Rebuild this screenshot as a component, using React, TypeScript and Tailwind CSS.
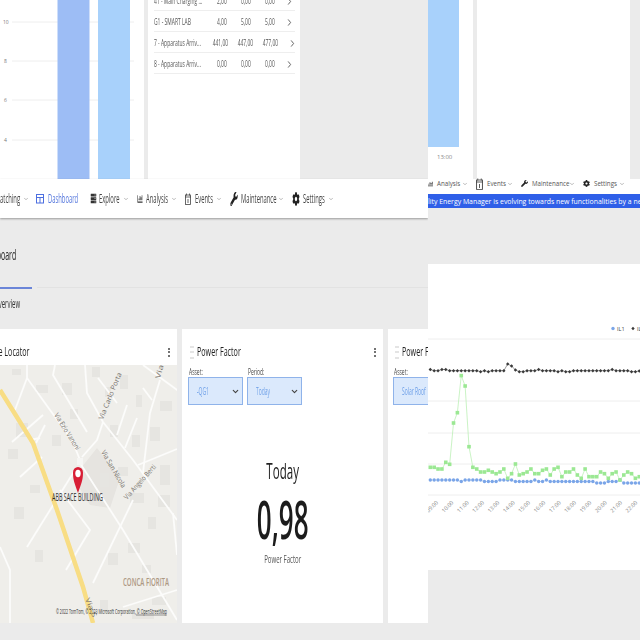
import type { ReactNode } from "react";
import { ChevronDown, ChevronRight } from "lucide-react";
import { FaChartBar, FaCog, FaServer, FaWrench } from "react-icons/fa";

// the left half of the capture is squashed horizontally, so its text is too
const Sq = ({
  children,
  className = "",
  squash = "scale-x-[.55]",
}: {
  children: ReactNode;
  className?: string;
  squash?: string;
}) => <span className={`inline-block whitespace-nowrap ${squash} ${className}`}>{children}</span>;

const rows = [
  { name: "41 - Main Charging ...", a: "2,00", b: "0,00", c: "0,00" },
  { name: "G1 - SMART LAB", a: "4,00", b: "5,00", c: "5,00" },
  { name: "7 - Apparatus Arriv...", a: "441,00", b: "447,00", c: "477,00" },
  { name: "8 - Apparatus Arriv...", a: "0,00", b: "0,00", c: "0,00" },
];

const green = [
  467.3, 467.3, 469, 469, 462.3, 464.3, 423, 412.7, 375.6, 386, 446.7, 467.3, 469, 472, 472, 470.3, 472, 473.7, 472, 469,
  478.3, 473.7, 464, 475, 473.7, 472, 469, 473.7, 473.7, 470.3, 469, 475, 469, 467.3, 476.7, 472, 472, 469, 475, 478.3,
  469, 476.7, 476.7, 476.7, 472, 473.7, 478.3, 473.7, 472, 480, 475, 472, 473.7, 478.3, 476.7,
];
const blue = [
  480, 480, 480, 480, 480, 480, 480, 480, 481.5, 480, 480, 480, 480, 480, 481.5, 481.5, 481.5, 481.5, 480, 480, 480, 480,
  481.5, 481.5, 481.5, 481.5, 481.5, 480, 481.5, 481.5, 480, 481.5, 481.5, 481.5, 481.5, 481.5, 481.5, 481.5, 481.5, 481.5,
  481.5, 481.5, 481.5, 483, 483, 483, 481.5, 481.5, 481.5, 480, 483, 483, 483, 483, 483,
];
const black = [
  369.5, 370.7, 370.7, 369.5, 369.5, 370.7, 370.7, 370.7, 370.7, 370.7, 370.7, 370.7, 370.7, 371.7, 370.7, 371.7, 370.7,
  370.7, 370.7, 370.7, 364, 366, 370, 371.7, 371.7, 370.7, 370.7, 370.7, 369.5, 370.7, 370.7, 370.7, 370.7, 371.7, 370.7,
  371.7, 371.7, 370.7, 370.7, 370.7, 370.7, 370.7, 370.7, 370.7, 370.7, 370.7, 370.7, 369.5, 370.7, 370.7, 370.7, 370.7,
  371.7, 371.7, 371,
];
const hours = ["09:00", "10:00", "11:00", "12:00", "13:00", "14:00", "15:00", "16:00", "17:00", "18:00", "19:00", "20:00", "21:00", "22:00"];
const px = (i: number) => 430.3 + i * 3.87;
const line = (ys: number[]) => ys.map((y, i) => `${px(i)},${y}`).join(" ");

const roads = [
  "27,0 27,13 50,45 72,75 80,95",
  "55,0 53,10 87,67",
  "85,0 87,28 103,57 133,95 177,155",
  "103,57 97,75 82,92",
  "98,13 117,38",
  "127,40 117,70",
  "137,53 125,83",
  "143,0 180,27",
  "160,15 150,48 143,108",
  "143,23 152,35",
  "138,100 177,84",
  "80,98 123,165 177,255",
  "133,135 93,218",
  "75,105 27,182",
  "12,77 43,50",
  "30,75 40,73",
  "20,112 42,92",
  "0,182 10,205 10,258",
  "123,242 177,225",
  "173,148 177,190",
  "45,60 36,78",
  "27,13 15,45",
  "60,125 90,165 66,205",
];
const blocks = [
  [12, 4, 9, 6], [36, 20, 12, 8], [62, 18, 10, 12], [70, 44, 8, 10], [105, 22, 6, 10], [120, 10, 8, 14], [136, 30, 6, 12],
  [16, 58, 12, 14], [8, 84, 10, 10], [30, 120, 10, 8], [14, 142, 10, 12], [52, 70, 9, 11], [118, 102, 10, 9], [150, 62, 10, 14],
  [160, 100, 10, 20], [100, 108, 9, 14], [130, 128, 14, 10], [148, 152, 8, 12], [108, 188, 10, 12], [35, 185, 8, 12],
  [142, 200, 9, 8], [100, 235, 8, 12], [132, 248, 22, 6], [92, 2, 8, 10], [160, 36, 12, 10], [110, 60, 8, 12], [132, 70, 8, 12],
  [158, 130, 12, 12], [128, 178, 12, 10], [152, 232, 14, 8],
];

const MapView = () => (
  <svg viewBox="0 0 177 258" className="block w-full h-full">
    <defs>
      <filter id="soft" x="-5%" y="-5%" width="110%" height="110%">
        <feGaussianBlur stdDeviation=".6" />
      </filter>
    </defs>
    <rect width="177" height="258" fill="#efeeea" />
    <g filter="url(#soft)">
      <polygon points="73,113 97,83 120,113 110,143 90,140" fill="#e6e4e0" />
      {blocks.map(([x, y, w, h], i) => (
        <rect key={i} x={x} y={y} width={w} height={h} fill="#e6e5e1" />
      ))}
      {roads.map((d, i) => (
        <polyline key={i} points={d} fill="none" stroke="#fcfcfb" strokeWidth="1.8" />
      ))}
      <polyline points="0,25 20,57 33,78 57,145 83,222 93,258" fill="none" stroke="#f8dd84" strokeWidth="4.5" />
      <rect x="77" y="93" width="6" height="7" fill="#f6f6f4" />
    </g>
    <g fill="#77736c" fontFamily="Open Sans" fontSize="7">
      <text x="54" y="50" transform="rotate(58 54 50)" textLength="42" lengthAdjust="spacingAndGlyphs">Via Ezio Vanoni</text>
      <text x="103" y="55" transform="rotate(-68 103 55)" textLength="50" lengthAdjust="spacingAndGlyphs">Via Carlo Porta</text>
      <text x="101" y="87" transform="rotate(60 101 87)" textLength="42" lengthAdjust="spacingAndGlyphs">Via San Nicola</text>
      <text x="127" y="135" transform="rotate(-48 127 135)" textLength="44" lengthAdjust="spacingAndGlyphs">Via Angelo Berti</text>
      <text x="160" y="14" transform="rotate(-75 160 14)" textLength="14" lengthAdjust="spacingAndGlyphs">Via</text>
      <text x="85" y="234" transform="rotate(68 85 234)" textLength="20" lengthAdjust="spacingAndGlyphs">Via S</text>
    </g>
    <path d="M78 128 C75 119 73 116 73 107.500 A5 5.500 0 0 1 83 107.500 C83 116 81 119 78 128 Z" fill="#d81e35" />
    <ellipse cx="78" cy="108.500" rx="2.700" ry="3.700" fill="#ffffff" />
    <text x="52" y="136" fontFamily="Open Sans" fontSize="10" fontWeight="500" fill="#2b2b2b" textLength="51" lengthAdjust="spacingAndGlyphs">
      ABB SACE BUILDING
    </text>
    <text x="123" y="221" fontFamily="Open Sans" fontSize="10" fontWeight="600" fill="#ad9883" textLength="46" lengthAdjust="spacingAndGlyphs">
      CONCA FIORITA
    </text>
    <text x="56" y="249" fontFamily="Open Sans" fontSize="6.500" fill="#333333" textLength="111" lengthAdjust="spacingAndGlyphs">
      © 2022 TomTom, © 2023 Microsoft Corporation, © OpenStreetMap
    </text>
    <line x1="136" y1="250" x2="167" y2="250" stroke="#333333" strokeWidth=".5" />
  </svg>
);

const BarChart = () => (
  <svg viewBox="0 0 144 179" className="block w-full h-full">
    {[22, 61, 100, 140].map((y) => (
      <line key={y} x1="12" y1={y} x2="134" y2={y} stroke="#eeeeee" />
    ))}
    <g fontFamily="Open Sans" fontSize="5" fill="#777777">
      <text x="3" y="24">10</text>
      <text x="4" y="63">8</text>
      <text x="4" y="102">6</text>
      <text x="4" y="142">4</text>
    </g>
    <rect x="57.500" y="0" width="32" height="179" fill="#9dbdf5" />
    <rect x="98" y="0" width="32" height="179" fill="#a8d1fb" />
  </svg>
);

const LineChart = () => (
  <svg viewBox="428 264 212 306" className="block w-full h-full">
    {[339, 401, 433, 464, 495].map((y) => (
      <line key={y} x1="428" y1={y} x2="640" y2={y} stroke="#eeeeee" />
    ))}
    <polyline points={line(blue)} fill="none" stroke="#b8cff2" strokeWidth=".7" />
    <polyline points={line(green)} fill="none" stroke="#bdf0b6" strokeWidth=".8" />
    <polyline points={line(black)} fill="none" stroke="#555555" strokeWidth=".6" />
    {blue.map((y, i) => (
      <circle key={i} cx={px(i)} cy={y} r="1.700" fill="#7aa5e8" />
    ))}
    {green.map((y, i) => (
      <rect key={i} x={px(i) - 1.800} y={y - 1.800} width="3.600" height="3.600" fill="#9be893" />
    ))}
    {black.map((y, i) => (
      <path key={i} d={`M${px(i)} ${y - 1.700}l1.700 1.700l-1.700 1.700l-1.700 -1.700z`} fill="#3a3a3a" />
    ))}
    <circle cx="613" cy="328.500" r="1.700" fill="#7aa5e8" />
    <text x="617" y="331" fontFamily="Open Sans" fontSize="5.500" fill="#444444">IL1</text>
    <path d="M633 326.800l1.700 1.700l-1.700 1.700l-1.700 -1.700z" fill="#3a3a3a" />
    <text x="637" y="331" fontFamily="Open Sans" fontSize="5.500" fill="#444444">IL2</text>
    {hours.map((h, i) => (
      <g key={h} transform={`translate(${438.5 + i * 15.33} 503) rotate(-45)`}>
        <text textAnchor="end" fontFamily="Open Sans" fontSize="5.500" fill="#888888">
          {h}
        </text>
      </g>
    ))}
  </svg>
);

const DragDots = () => (
  <div className="grid grid-cols-2 gap-y-[3.500px] w-[4px] shrink-0">
    {[0, 1, 2, 3, 4, 5].map((i) => (
      <span key={i} className="h-[2px] w-[2px] bg-[#e4e4e4]" />
    ))}
  </div>
);

const Kebab = () => (
  <div className="flex flex-col gap-[1.500px]">
    <span className="h-[2px] w-[2px] rounded-full bg-[#444]" />
    <span className="h-[2px] w-[2px] rounded-full bg-[#444]" />
    <span className="h-[2px] w-[2px] rounded-full bg-[#444]" />
  </div>
);

const Select = ({ label, value, className = "" }: { label: string; value: string; className?: string }) => (
  <div className={`flex flex-col shrink-0 ${className}`}>
    <div className="h-[11px] flex items-center pl-[1px] text-[9px] text-[#444]">
      <Sq className="origin-left">{label}</Sq>
    </div>
    <div className="h-[28px] flex items-center justify-between pl-[8px] pr-[2px] bg-[#dbe9fc] border border-[#8fb3ea] text-[11px] text-[#6d9fe8] overflow-hidden">
      <Sq className="origin-left w-[20px]" squash="scale-x-[.45]">
        {value}
      </Sq>
      <ChevronDown size={9} strokeWidth={3} className="text-[#444] shrink-0" />
    </div>
  </div>
);

const TopRow = ({ name, a, b, c }: { name: string; a: string; b: string; c: string }) => (
  <div className="h-[21px] flex items-center pt-[2px] border-b border-[#eeeeee] text-[9px] text-[#555]">
    <div className="w-[49px] flex">
      <Sq className="origin-left">{name}</Sq>
    </div>
    <div className="w-[25px] flex justify-end">
      <Sq className="origin-right">{a}</Sq>
    </div>
    <div className="w-[25px] flex justify-end">
      <Sq className="origin-right">{b}</Sq>
    </div>
    <div className="w-[25px] flex justify-end">
      <Sq className="origin-right">{c}</Sq>
    </div>
    <ChevronRight size={11} strokeWidth={1.800} className="ml-[9px] shrink-0 text-[#333] scale-x-[.8]" />
  </div>
);

const DashIcon = () => (
  <svg width="8" height="11" viewBox="0 0 8 11" fill="none" stroke="#4d6fe0" strokeWidth="1">
    <rect x=".5" y="1.500" width="7" height="8.500" />
    <line x1=".5" y1="4.500" x2="7.500" y2="4.500" />
    <line x1="4" y1="4.500" x2="4" y2="10" />
  </svg>
);

const CalIcon = ({ w = 6 }: { w?: number }) => (
  <svg width={w} height="12" viewBox="0 0 6 12" fill="none" stroke="#444444" strokeWidth=".8" preserveAspectRatio="none">
    <rect x=".5" y="2" width="5" height="9.500" />
    <line x1="0" y1="4" x2="6" y2="4" />
    <line x1="1.500" y1=".5" x2="1.500" y2="2.500" />
    <line x1="4.500" y1=".5" x2="4.500" y2="2.500" />
    <line x1="3" y1="6" x2="3" y2="10" />
  </svg>
);

const Caret = ({ className = "" }: { className?: string }) => (
  <ChevronDown size={6} strokeWidth={2} className={`text-[#777] shrink-0 ${className}`} />
);

// keeps the squashed icon inside the width it takes in the capture
const NarrowIcon = ({ children, width }: { children: ReactNode; width: string }) => (
  <span className={`flex justify-center ${width}`}>
    <span className="inline-flex shrink-0 scale-x-[.55]">{children}</span>
  </span>
);

const LeftNavItem = ({ icon, label, width }: { icon: ReactNode; label: string; width: string }) => (
  <div className="flex items-center ml-[8px]">
    {icon}
    <div className={`ml-[4px] flex ${width}`}>
      <Sq className="origin-left" squash="scale-x-[.45]">
        {label}
      </Sq>
    </div>
    <Caret className="ml-[2px]" />
  </div>
);

const RightNavItem = ({ icon, label, width }: { icon: ReactNode; label: string; width: string }) => (
  <div className="flex items-center ml-[8px]">
    {icon}
    <span className={`ml-[4px] ${width}`}>{label}</span>
    <Caret className="ml-[2px]" />
  </div>
);

export default function App() {
  return (
    <div className="flex w-[640px] h-[640px] overflow-hidden bg-[#ebebeb] font-['Open_Sans',sans-serif]">
      {/* left capture */}
      <div className="w-[428px] shrink-0 overflow-hidden flex flex-col">
        <div className="h-[179px] flex shrink-0">
          <div className="w-[144px] bg-white">
            <BarChart />
          </div>
          <div className="w-[152px] ml-[4px] bg-white pl-[6px] pr-[5px] overflow-hidden">
            <div className="-mt-[10px]">
              {rows.map((r) => (
                <TopRow key={r.name} {...r} />
              ))}
            </div>
          </div>
        </div>

        <div className="h-[39px] shrink-0 flex items-center bg-white shadow-[0_1px_2px_rgba(0,0,0,.35)] relative text-[13px] text-[#444]">
          <div className="w-[20px] flex justify-end">
            <Sq className="origin-right" squash="scale-x-[.45]">
              Matching
            </Sq>
          </div>
          <Caret className="ml-[3px]" />
          <div className="flex items-center ml-[7px] text-[#5577dd]">
            <DashIcon />
            <div className="ml-[4px] w-[30px] flex">
              <Sq className="origin-left" squash="scale-x-[.45]">
                Dashboard
              </Sq>
            </div>
          </div>
          <div className="ml-[5px]" />
          <LeftNavItem icon={<NarrowIcon width="w-[4px]"><FaServer size={11} className="text-[#333]" /></NarrowIcon>} label="Explore" width="w-[22px]" />
          <LeftNavItem icon={<NarrowIcon width="w-[5px]"><FaChartBar size={10} className="text-[#333]" /></NarrowIcon>} label="Analysis" width="w-[23px]" />
          <LeftNavItem icon={<CalIcon />} label="Events" width="w-[19px]" />
          <LeftNavItem icon={<NarrowIcon width="w-[7px]"><FaWrench size={14} className="text-[#222]" /></NarrowIcon>} label="Maintenance" width="w-[35px]" />
          <LeftNavItem icon={<NarrowIcon width="w-[7px]"><FaCog size={14} className="text-[#222]" /></NarrowIcon>} label="Settings" width="w-[23px]" />
        </div>

        <div className="h-[111px] shrink-0 pt-[26px]">
          <div className="h-[20px] w-[16px] flex justify-end items-center text-[14px] font-medium text-[#222]">
            <Sq className="origin-right" squash="scale-x-[.5]">
              Dashboard
            </Sq>
          </div>
          <div className="mt-[23px] h-[2px] flex">
            <div className="w-[32px] bg-[#6b85d8]" />
            <div className="flex-1 ml-[5px] border-t border-[#e2e2e2]" />
          </div>
          <div className="mt-[7px] h-[16px] w-[20px] flex justify-end items-center text-[12px] text-[#333]">
            <Sq className="origin-right" squash="scale-x-[.5]">
              Overview
            </Sq>
          </div>
        </div>

        <div className="h-[294px] shrink-0 flex gap-[5px]">
          <div className="w-[177px] shrink-0 flex flex-col bg-white">
            <div className="h-[36px] shrink-0 flex items-center justify-between pr-[7px] pt-[10px] text-[13px] font-medium text-[#222]">
              <div className="w-[30px] flex justify-end">
                <Sq className="origin-right">Site Locator</Sq>
              </div>
              <Kebab />
            </div>
            <div className="flex-1 min-h-0">
              <MapView />
            </div>
          </div>

          <div className="w-[201px] shrink-0 flex flex-col bg-white pl-[6px]">
            <div className="h-[37px] shrink-0 flex items-center pt-[9px] pr-[7px]">
              <div className="ml-[2px]">
                <DragDots />
              </div>
              <div className="ml-[3px] flex-1 flex text-[13px] font-medium text-[#222]">
                <Sq className="origin-left">Power Factor</Sq>
              </div>
              <Kebab />
            </div>
            <div className="flex gap-[4px]">
              <Select label="Asset:" value="-QG1" className="w-[55px]" />
              <Select label="Period:" value="Today" className="w-[55px]" />
            </div>
            <div className="flex flex-col items-center pr-[6px] pt-[51px]">
              <div className="h-[30px] flex justify-center items-center text-[21px] leading-none text-[#222]">
                <Sq className="origin-center">Today</Sq>
              </div>
              <div className="mt-[4px] h-[58px] flex justify-center items-center text-[52px] leading-none font-semibold text-[#1c1c1c]">
                <Sq className="origin-center" squash="scale-x-[.5]">
                  0,98
                </Sq>
              </div>
              <div className="mt-[3px] h-[14px] flex justify-center items-center text-[11px] leading-none text-[#555]">
                <Sq className="origin-center">Power Factor</Sq>
              </div>
            </div>
          </div>

          <div className="w-[100px] shrink-0 bg-white pl-[5px]">
            <div className="h-[37px] flex items-center pt-[9px]">
              <div className="ml-[2px]">
                <DragDots />
              </div>
              <div className="ml-[3px] flex text-[13px] font-medium text-[#222]">
                <Sq className="origin-left">Power Factor</Sq>
              </div>
            </div>
            <Select label="Asset:" value="Solar Roof" className="w-[60px]" />
          </div>
        </div>
      </div>

      {/* right capture */}
      <div className="flex-1 min-w-0 overflow-hidden flex flex-col">
        <div className="h-[179px] flex shrink-0">
          <div className="w-[45px] bg-white">
            <div className="w-[31px] h-[147px] bg-[#a8d1fb]" />
            <div className="w-[31px] mt-[6px] pl-[9px] text-[6px] text-[#888]">13:00</div>
          </div>
          <div className="w-[153px] ml-[4px] bg-white" />
        </div>
        <div className="h-[15px] shrink-0 flex items-center pb-[6px] bg-white text-[6.200px] text-[#555]">
          <FaChartBar size={6} className="text-[#333] -ml-[1px]" />
          <span className="ml-[4px] w-[23px]">Analysis</span>
          <Caret className="ml-[2px]" />
          <RightNavItem icon={<CalIcon w={7} />} label="Events" width="w-[18px]" />
          <RightNavItem icon={<FaWrench size={7} className="text-[#222]" />} label="Maintenance" width="w-[35px]" />
          <RightNavItem icon={<FaCog size={7} className="text-[#222]" />} label="Settings" width="w-[23px]" />
        </div>
        <div className="h-[14px] shrink-0 flex items-center pt-[2px] overflow-hidden bg-[#2f5fe8] text-[6.900px] font-medium text-white whitespace-nowrap">
          lity Energy Manager is evolving towards new functionalities by a new
        </div>
        <div className="h-[56px] shrink-0" />
        <div className="h-[306px] shrink-0 bg-white">
          <LineChart />
        </div>
      </div>
    </div>
  );
}
